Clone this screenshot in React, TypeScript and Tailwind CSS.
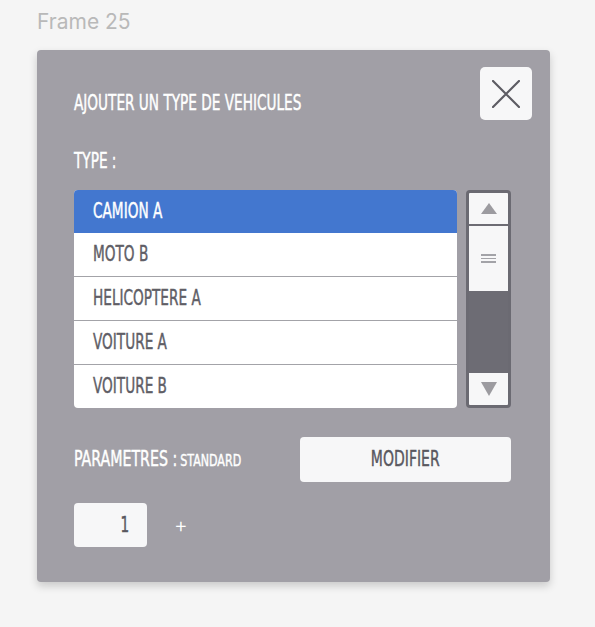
import React from "react";

const cond = "font-['DejaVu_Sans_Condensed','DejaVu_Sans',sans-serif] [-webkit-text-stroke:0.4px_currentColor]";
const sx = "inline-block origin-left scale-x-[0.74] whitespace-nowrap";

const items = ["CAMION A", "MOTO B", "HELICOPTERE A", "VOITURE A", "VOITURE B"];

export default function App() {
  return (
    <div className="min-h-[627px] bg-[#f5f5f5] pl-[37px] pt-[9px]">
      <div className="font-['Inter',sans-serif] text-[21px] leading-[26px] text-[#b9b9b9]">Frame 25</div>
      <div className={`mt-[15px] w-[513px] h-[532px] rounded-[4px] bg-[#a19fa6] pl-[37px] pr-[18px] pt-[17px] shadow-[0_4px_8px_rgba(0,0,0,0.18)] ${cond}`}>
        <div className="flex justify-between">
          <h1 className="mt-[25px] text-[20.5px] leading-[22px] font-normal text-white">
            <span className={sx}>AJOUTER UN TYPE DE VEHICULES</span>
          </h1>
          <button className="flex h-[53px] w-[52px] shrink-0 items-center justify-center rounded-[5px] bg-[#f7f7f8]">
            <svg width="28" height="28" viewBox="0 0 28 28" fill="none" stroke="#5d5c63" strokeWidth="2.2" strokeLinecap="round">
              <path d="M1 1L27 27M27 1L1 27" />
            </svg>
          </button>
        </div>
        <div className="mt-[30px] text-[20.5px] leading-[22px] text-white">
          <span className={sx}>TYPE :</span>
        </div>
        <div className="mt-[18px] flex h-[218px] gap-[9px] pr-[21px]">
          <div className="flex-1 overflow-hidden rounded-[4px] bg-white">
            {items.map((it, i) => (
              <div
                key={it}
                className={
                  i === 0
                    ? "flex h-[43px] items-center bg-[#4377cf] pb-[1px] pl-[19px] text-[20.5px] text-white"
                    : i === 1
                    ? "flex h-[43px] items-center pb-[1px] pl-[19px] text-[20.5px] text-[#5f5e66]"
                    : "flex h-[44px] items-center border-t border-[#a3a3a8] pb-[1px] pl-[19px] text-[20.5px] text-[#5f5e66]"
                }
              >
                <span className={sx}>{it}</span>
              </div>
            ))}
          </div>
          <div className="flex w-[45px] shrink-0 flex-col overflow-hidden rounded-[4px] border-[3px] border-[#6b6a72] bg-[#6d6c74]">
            <div className="flex h-[31px] items-center justify-center bg-[#f7f7f8]">
              <svg width="16" height="11" viewBox="0 0 16 11"><path d="M8 0L16 11H0Z" fill="#9c9ba0" /></svg>
            </div>
            <div className="mt-[2px] flex h-[65px] flex-col items-center justify-center gap-[2px] bg-[#f7f7f8]">
              <div className="h-[1.5px] w-[15px] bg-[#a3a3a8]" />
              <div className="h-[1.5px] w-[15px] bg-[#a3a3a8]" />
              <div className="h-[1.5px] w-[15px] bg-[#a3a3a8]" />
            </div>
            <div className="flex-1" />
            <div className="flex h-[32px] items-center justify-center bg-[#f7f7f8]">
              <svg width="16" height="14" viewBox="0 0 16 14"><path d="M0 0H16L8 14Z" fill="#9c9ba0" /></svg>
            </div>
          </div>
        </div>
        <div className="mt-[29px] flex items-center justify-between pr-[21px]">
          <div className="text-white">
            <span className="inline-block origin-left scale-x-[0.77] whitespace-nowrap">
              <span className="text-[20.5px]">PARAMETRES :</span>
              <span className="ml-[4px] text-[16px]">STANDARD</span>
            </span>
          </div>
          <button className="flex h-[45px] w-[211px] shrink-0 items-center justify-center rounded-[4px] bg-[#f7f7f8] text-[20.5px] text-[#59585f]">
            <span className="inline-block scale-x-[0.76] whitespace-nowrap">MODIFIER</span>
          </button>
        </div>
        <div className="mt-[21px] flex items-center">
          <div className="flex h-[44px] w-[73px] items-center justify-end rounded-[4px] bg-[#f7f7f8] pr-[16px] text-[20.5px] text-[#59585f]">
            <span className="inline-block scale-x-[0.74]">1</span>
          </div>
          <span className="ml-[27px] font-['Inter',sans-serif] text-[21px] font-light text-white [-webkit-text-stroke:0px]">+</span>
        </div>
      </div>
    </div>
  );
}
